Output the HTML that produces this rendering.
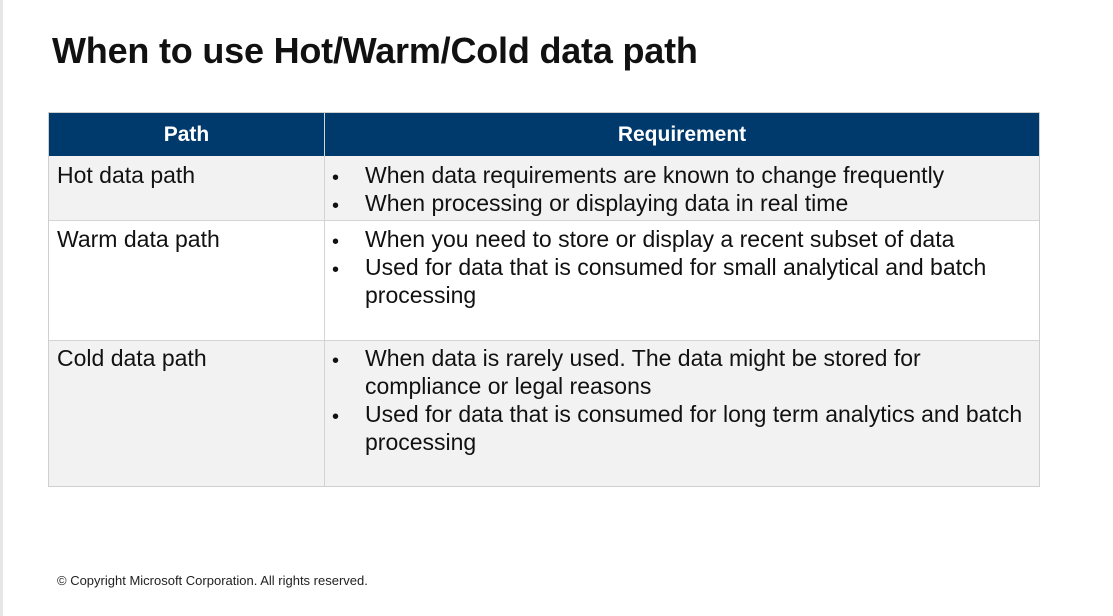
<!DOCTYPE html>
<html><head><meta charset="utf-8"><style>
body{margin:0;width:1113px;height:616px;background:#fff;position:relative;overflow:hidden;font-family:"Liberation Sans",sans-serif;color:#111}
.lb{position:absolute;left:0;top:0;width:3px;height:616px;background:#e6e6e6}
h1{position:absolute;left:52px;top:30px;margin:0;font-size:36px;font-weight:bold;letter-spacing:-0.2px;white-space:nowrap}
.t{position:absolute;left:48px;top:112px;width:992px;height:375px;border:1px solid #cfcfcf;box-sizing:border-box}
.r{position:absolute;left:0;width:990px;border-top:1px solid #d4d4d4;box-sizing:border-box}
.c1{position:absolute;left:8px;font-size:23px;white-space:nowrap}
.c2{position:absolute;left:316px;font-size:23px;line-height:28px;white-space:nowrap}
.b{position:absolute;left:-33px;font-size:20px;margin-top:3px}
.v{position:absolute;left:275px;top:0;width:1px;height:373px;background:#d4d4d4}
.hd{position:absolute;left:0;top:0;width:990px;height:43px;background:#003a6c;color:#fff;font-weight:bold;font-size:21px}
.hd span{position:absolute;top:10px;text-align:center}
.foot{position:absolute;left:57px;top:573px;font-size:13px;color:#222}
</style></head><body>
<div class="lb"></div>
<h1>When to use Hot/Warm/Cold data path</h1>
<div class="t">
 <div class="r" style="top:43px;height:64px;background:#f2f2f2;border-top:none"></div>
 <div class="r" style="top:107px;height:120px;background:#fff"></div>
 <div class="r" style="top:227px;height:146px;background:#f2f2f2"></div>
 <div class="hd"><span style="left:0;width:275px">Path</span><span style="left:276px;width:714px">Requirement</span></div>
 <div class="v"></div>
 <div class="c1" style="top:49px">Hot data path</div>
 <div class="c2" style="top:48px"><span class="b">•</span>When data requirements are known to change frequently<br><span class="b" style="top:28px">•</span>When processing or displaying data in real time</div>
 <div class="c1" style="top:113px">Warm data path</div>
 <div class="c2" style="top:112px"><span class="b">•</span>When you need to store or display a recent subset of data<br><span class="b" style="top:28px">•</span>Used for data that is consumed for small analytical and batch<br>processing</div>
 <div class="c1" style="top:232px">Cold data path</div>
 <div class="c2" style="top:231px"><span class="b">•</span>When data is rarely used. The data might be stored for<br>compliance or legal reasons<br><span class="b" style="top:56px">•</span>Used for data that is consumed for long term analytics and batch<br>processing</div>
</div>
<div class="foot">© Copyright Microsoft Corporation. All rights reserved.</div>
</body></html>
